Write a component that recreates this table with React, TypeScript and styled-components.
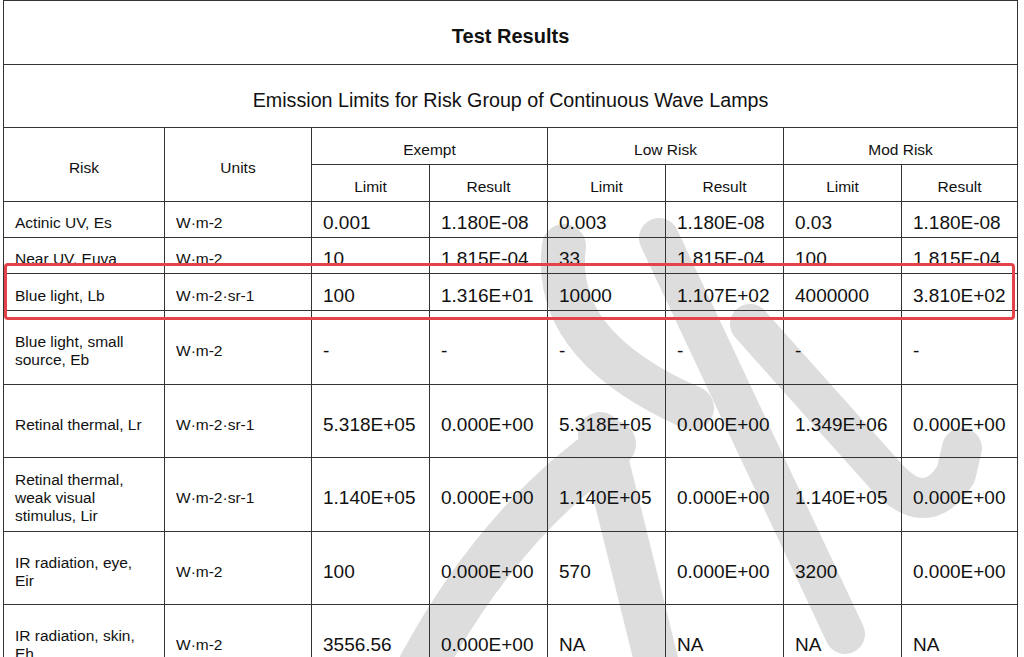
import React from "react";
import styled, { createGlobalStyle } from "styled-components";

const GlobalStyle = createGlobalStyle`
  html, body {
    margin: 0;
    padding: 0;
    background: #ffffff;
    overflow: hidden;
  }
  body {
    font-family: "Liberation Sans", Arial, sans-serif;
    color: #111111;
  }
`;

const Page = styled.div`
  position: relative;
  width: 1024px;
  height: 657px;
  overflow: hidden;
  padding-left: 3px;
  box-sizing: border-box;
`;

const Watermark = styled.svg`
  position: absolute;
  left: 0;
  top: 0;
  z-index: 0;
  pointer-events: none;
`;

const Sheet = styled.table`
  position: relative;
  z-index: 1;
  width: 1014px;
  border-collapse: collapse;
  table-layout: fixed;
  background: transparent;
`;

const Row = styled.tr<{ $h: number }>`
  height: ${(p) => p.$h}px;
`;

const Cell = styled.td<{ $center?: boolean }>`
  border: 1px solid #333333;
  padding: 7px 18px 0 11px;
  font-size: 15.5px;
  line-height: 18px;
  vertical-align: middle;
  text-align: ${(p) => (p.$center ? "center" : "left")};
  overflow: hidden;
`;

const TitleCell = styled(Cell)`
  font-size: 20px;
  font-weight: bold;
  padding: 6px 0 0 0;
`;

const CaptionCell = styled(Cell)`
  font-size: 19.7px;
  padding: 7px 0 0 0;
`;

const HeadCell = styled(Cell)`
  padding: 7px 0 0 0;
`;

const NumCell = styled(Cell)`
  font-size: 19px;
  padding-right: 2px;
  white-space: nowrap;
`;

// the Near UV row is partly hidden under the pasted row in the original
const CutCell = styled(Cell)<{ $num?: boolean }>`
  vertical-align: top;
  padding-top: 0;
  padding-right: 2px;
  font-size: ${(p) => (p.$num ? "19px" : "15.5px")};
  white-space: nowrap;
`;

const Cut = styled.span`
  display: block;
  height: 27px;
  padding-top: 12px;
  box-sizing: border-box;
  overflow: hidden;
`;

const Highlight = styled.div`
  position: absolute;
  left: 4px;
  top: 263px;
  width: 1011px;
  height: 57px;
  box-sizing: border-box;
  border: 3px solid #e4434a;
  border-radius: 4px;
  z-index: 2;
  pointer-events: none;
`;

type Line = { risk: string; unit: string; values: string[]; h: number };

const lines: Line[] = [
  { risk: "Actinic UV, Es", unit: "W·m-2", values: ["0.001", "1.180E-08", "0.003", "1.180E-08", "0.03", "1.180E-08"], h: 36 },
  { risk: "Near UV, Euva", unit: "W·m-2", values: ["10", "1.815E-04", "33", "1.815E-04", "100", "1.815E-04"], h: 36 },
  { risk: "Blue light, Lb", unit: "W·m-2·sr-1", values: ["100", "1.316E+01", "10000", "1.107E+02", "4000000", "3.810E+02"], h: 37 },
  { risk: "Blue light, small source, Eb", unit: "W·m-2", values: ["-", "-", "-", "-", "-", "-"], h: 74 },
  { risk: "Retinal thermal, Lr", unit: "W·m-2·sr-1", values: ["5.318E+05", "0.000E+00", "5.318E+05", "0.000E+00", "1.349E+06", "0.000E+00"], h: 73 },
  { risk: "Retinal thermal, weak visual stimulus, Lir", unit: "W·m-2·sr-1", values: ["1.140E+05", "0.000E+00", "1.140E+05", "0.000E+00", "1.140E+05", "0.000E+00"], h: 74 },
  { risk: "IR radiation, eye, Eir", unit: "W·m-2", values: ["100", "0.000E+00", "570", "0.000E+00", "3200", "0.000E+00"], h: 73 },
  { risk: "IR radiation, skin, Eh", unit: "W·m-2", values: ["3556.56", "0.000E+00", "NA", "NA", "NA", "NA"], h: 73 },
];

const groups = ["Exempt", "Low Risk", "Mod Risk"];

const widths = [161, 147, 118, 118, 118, 118, 118, 116];

const WatermarkShape = () => (
  <Watermark width="1024" height="700" viewBox="0 0 1024 700">
    <g fill="none" stroke="#dddddd" strokeLinecap="round" strokeLinejoin="round">
      <path d="M 659 238 L 845 634" strokeWidth="40" />
      <path d="M 564 246 C 556 310 592 364 692 408" strokeWidth="44" />
      <path d="M 750 324 L 884 474 Q 926 522 956 474 L 962 448" strokeWidth="40" />
      <path d="M 612 444 Q 500 522 422 666" strokeWidth="48" />
      <path d="M 600 434 L 658 668" strokeWidth="44" />
    </g>
  </Watermark>
);

export default function App() {
  return (
    <Page>
      <GlobalStyle />
      <WatermarkShape />
      <Sheet>
        <colgroup>
          {widths.map((w, i) => (
            <col key={i} style={{ width: w }} />
          ))}
        </colgroup>
        <tbody>
          <Row $h={64}>
            <TitleCell colSpan={8} $center>Test Results</TitleCell>
          </Row>
          <Row $h={63}>
            <CaptionCell colSpan={8} $center>
              Emission Limits for Risk Group of Continuous Wave Lamps
            </CaptionCell>
          </Row>
          <Row $h={37}>
            <HeadCell rowSpan={2} $center>Risk</HeadCell>
            <HeadCell rowSpan={2} $center>Units</HeadCell>
            {groups.map((g) => (
              <HeadCell key={g} colSpan={2} $center>{g}</HeadCell>
            ))}
          </Row>
          <Row $h={37}>
            {groups.map((g) => (
              <React.Fragment key={g}>
                <HeadCell $center>Limit</HeadCell>
                <HeadCell $center>Result</HeadCell>
              </React.Fragment>
            ))}
          </Row>
          {lines.map((l, i) =>
            i === 1 ? (
              <Row key={l.risk} $h={l.h}>
                <CutCell><Cut>{l.risk}</Cut></CutCell>
                <CutCell><Cut>{l.unit}</Cut></CutCell>
                {l.values.map((v, j) => (
                  <CutCell key={j} $num><Cut>{v}</Cut></CutCell>
                ))}
              </Row>
            ) : (
              <Row key={l.risk} $h={l.h}>
                <Cell>{l.risk}</Cell>
                <Cell>{l.unit}</Cell>
                {l.values.map((v, j) => (
                  <NumCell key={j}>{v}</NumCell>
                ))}
              </Row>
            )
          )}
        </tbody>
      </Sheet>
      <Highlight />
    </Page>
  );
}
